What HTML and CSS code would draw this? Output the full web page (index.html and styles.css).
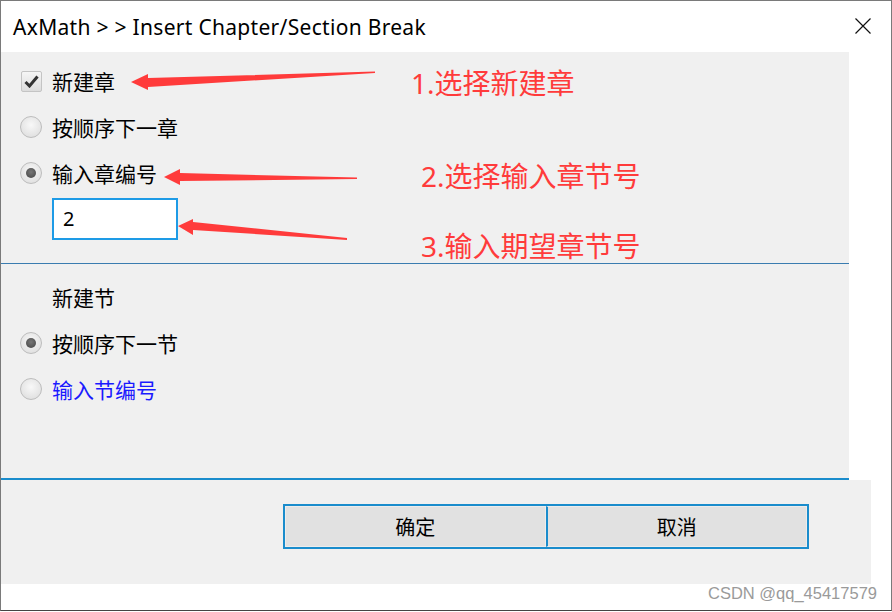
FILE: index.html
```html
<!doctype html>
<html lang="zh-CN">
  <head>
    <meta charset="UTF-8">
    <title>AxMath >> Insert Chapter/Section Break</title>
    <link rel="stylesheet" href="styles.css">
  </head>
  <body>
    <div class="window">
      <div class="titlebar">
        <span class="title">AxMath &gt; &gt; Insert Chapter/Section Break</span>
        <svg class="close" width="16" height="16" viewBox="0 0 16 16">
          <path d="M0.5 0.5 L15.5 15.5 M15.5 0.5 L0.5 15.5" stroke="#111" stroke-width="1.2" fill="none"/>
        </svg>
      </div>

      <div class="panel">
        <!-- chapter options -->
        <div class="section chapter">
          <div class="row">
            <span class="check">
              <svg width="15" height="13" viewBox="0 0 15 13">
                <path d="M1.5 7 L5.5 11 L13.5 1.5" stroke="#333" stroke-width="3" fill="none"/>
              </svg>
            </span>
            <span class="label">新建章</span>
          </div>
          <div class="row">
            <span class="radio"></span>
            <span class="label">按顺序下一章</span>
          </div>
          <div class="row">
            <span class="radio on"></span>
            <span class="label">输入章编号</span>
          </div>
          <div class="number">2</div>
        </div>

        <!-- section options -->
        <div class="section">
          <div class="row">
            <span class="label">新建节</span>
          </div>
          <div class="row">
            <span class="radio on"></span>
            <span class="label">按顺序下一节</span>
          </div>
          <div class="row">
            <span class="radio"></span>
            <span class="label link">输入节编号</span>
          </div>
        </div>
      </div>

      <div class="footer">
        <div class="buttons">
          <button class="btn">确定</button>
          <button class="btn">取消</button>
        </div>
      </div>
      <div class="watermark">CSDN @qq_45417579</div>

      <!-- annotations -->
      <svg class="arrows" width="892" height="612" viewBox="0 0 892 612">
        <polygon points="131,82 148,74 148,78 375,71.5 375,73 148,87 148,90" fill="#ff3b3b"/>
        <polygon points="164,177 180,169 180,173 357,177.5 357,179 180,181 180,185" fill="#ff3b3b"/>
        <polygon points="178,226 193,219 193,222 347,238 347,240 193,230 193,235" fill="#ff3b3b"/>
      </svg>
      <div class="note note1">1.选择新建章</div>
      <div class="note note2">2.选择输入章节号</div>
      <div class="note note3">3.输入期望章节号</div>
    </div>
  </body>
</html>
```

FILE: styles.css
```css
body {
  margin: 0;
  font-family: "Noto Sans", "Noto Sans CJK SC", sans-serif;
  background: #fff;
}
.window {
  position: relative;
  width: 892px;
  height: 611px;
  box-sizing: border-box;
  border: 1px solid #7a7a7a;
  border-bottom-color: #444;
  background: #fff;
  overflow: hidden;
}
.titlebar {
  height: 51px;
  display: flex;
  align-items: center;
  justify-content: space-between;
  padding: 0 20px 0 12px;
}
.title {
  font-size: 21px;
  color: #000;
  letter-spacing: 0.3px;
}
.close {
  margin-top: -2px;
}
.panel {
  width: 848px;
  background: #f0f0f0;
  border-bottom: 2px solid #1a8ccc;
}
.section {
  padding: 10px 0 66px 19px;
}
.chapter {
  padding: 6px 0 23px 19px;
  border-bottom: 1px solid #3a7cb0;
}
.row {
  height: 46px;
  display: flex;
  align-items: center;
  gap: 10px;
}
.label {
  margin-left: 32px;
  font-family: "Noto Sans CJK SC", sans-serif;
  font-size: 21px;
  color: #000;
}
.check + .label,
.radio + .label {
  margin-left: 0;
}
.link {
  color: #1a1aff;
}
.check {
  width: 21px;
  height: 21px;
  margin-left: 1px;
  box-sizing: border-box;
  border: 1px solid #c4c4c4;
  border-radius: 2px;
  background: linear-gradient(#f6f6f6, #dcdcdc);
  display: flex;
  align-items: center;
  justify-content: center;
}
.radio {
  width: 22px;
  height: 22px;
  box-sizing: border-box;
  border: 1px solid #bdbdbd;
  border-radius: 50%;
  background: radial-gradient(circle at 50% 40%, #f8f8f8, #dadada);
  display: flex;
  align-items: center;
  justify-content: center;
}
.radio.on::after {
  content: "";
  width: 10px;
  height: 10px;
  border-radius: 50%;
  background: radial-gradient(circle at 50% 40%, #777, #444);
}
.number {
  width: 126px;
  height: 42px;
  margin: 2px 0 0 32px;
  box-sizing: border-box;
  border: 2px solid #1e9be6;
  background: #fff;
  padding-left: 9px;
  font-size: 20px;
  line-height: 38px;
}
.footer {
  width: 870px;
  height: 104px;
  background: #f0f0f0;
  padding: 24px 0 0 282px;
  box-sizing: border-box;
}
.buttons {
  display: flex;
  width: 526px;
  height: 45px;
  box-sizing: border-box;
  border: 2px solid #1a8ccc;
}
.btn {
  flex: 1;
  border: 1px solid #ececec;
  background: #e1e1e1;
  font-family: "Noto Sans CJK SC", sans-serif;
  font-size: 20px;
  color: #000;
  padding: 0;
}
.btn + .btn {
  border-left: 2px solid #1a8ccc;
}
.watermark {
  text-align: right;
  padding-right: 14px;
  font-family: "Liberation Sans", sans-serif;
  font-size: 16.5px;
  color: #9a9a9a;
  line-height: 18px;
}
.arrows {
  position: absolute;
  left: -1px;
  top: -1px;
}
.note {
  position: absolute;
  font-family: "Noto Sans", "Noto Sans CJK SC", sans-serif;
  font-size: 28px;
  color: #ff3b3b;
  line-height: 30px;
  white-space: nowrap;
}
.note1 {
  left: 410px;
  top: 67px;
}
.note2 {
  left: 420px;
  top: 160px;
}
.note3 {
  left: 420px;
  top: 230px;
}
```
